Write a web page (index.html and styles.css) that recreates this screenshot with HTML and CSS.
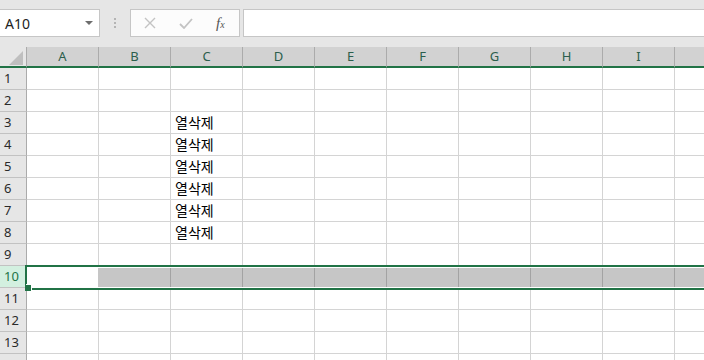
FILE: index.html
```html
<!DOCTYPE html>
<html lang="ko">
<head>
    <meta charset="UTF-8">
    <title>Sheet1</title>
    <link rel="stylesheet" href="styles.css">
</head>
<body>
    <div class="toolbar">
        <div class="namebox">
            <span>A10</span>
            <span class="caret"></span>
        </div>
        <div class="grip"><i></i><i></i><i></i></div>
        <div class="fxbox">
            <svg class="ico" width="12" height="12" viewBox="0 0 12 12"><path d="M1 1L11 11M11 1L1 11" stroke="#c3c3c3" stroke-width="1.4" fill="none"/></svg>
            <svg class="ico" width="14" height="11" viewBox="0 0 14 11"><path d="M1 6L5 10L13 1" stroke="#c3c3c3" stroke-width="1.8" fill="none"/></svg>
            <span class="fx">f<sub>x</sub></span>
        </div>
        <div class="formula"></div>
    </div>

    <div class="sheet">
        <div class="row head">
            <div class="corner"><span class="tri"></span></div>
            <div class="ch">A</div><div class="ch">B</div><div class="ch">C</div><div class="ch">D</div><div class="ch">E</div>
            <div class="ch">F</div><div class="ch">G</div><div class="ch">H</div><div class="ch">I</div><div class="ch"></div>
        </div>
        <div class="row"><div class="rh">1</div><div class="c"></div><div class="c"></div><div class="c"></div><div class="c"></div><div class="c"></div><div class="c"></div><div class="c"></div><div class="c"></div><div class="c"></div><div class="c"></div></div>
        <div class="row"><div class="rh">2</div><div class="c"></div><div class="c"></div><div class="c"></div><div class="c"></div><div class="c"></div><div class="c"></div><div class="c"></div><div class="c"></div><div class="c"></div><div class="c"></div></div>
        <div class="row"><div class="rh">3</div><div class="c"></div><div class="c"></div><div class="c">열삭제</div><div class="c"></div><div class="c"></div><div class="c"></div><div class="c"></div><div class="c"></div><div class="c"></div><div class="c"></div></div>
        <div class="row"><div class="rh">4</div><div class="c"></div><div class="c"></div><div class="c">열삭제</div><div class="c"></div><div class="c"></div><div class="c"></div><div class="c"></div><div class="c"></div><div class="c"></div><div class="c"></div></div>
        <div class="row"><div class="rh">5</div><div class="c"></div><div class="c"></div><div class="c">열삭제</div><div class="c"></div><div class="c"></div><div class="c"></div><div class="c"></div><div class="c"></div><div class="c"></div><div class="c"></div></div>
        <div class="row"><div class="rh">6</div><div class="c"></div><div class="c"></div><div class="c">열삭제</div><div class="c"></div><div class="c"></div><div class="c"></div><div class="c"></div><div class="c"></div><div class="c"></div><div class="c"></div></div>
        <div class="row"><div class="rh">7</div><div class="c"></div><div class="c"></div><div class="c">열삭제</div><div class="c"></div><div class="c"></div><div class="c"></div><div class="c"></div><div class="c"></div><div class="c"></div><div class="c"></div></div>
        <div class="row"><div class="rh">8</div><div class="c"></div><div class="c"></div><div class="c">열삭제</div><div class="c"></div><div class="c"></div><div class="c"></div><div class="c"></div><div class="c"></div><div class="c"></div><div class="c"></div></div>
        <div class="row"><div class="rh">9</div><div class="c"></div><div class="c"></div><div class="c"></div><div class="c"></div><div class="c"></div><div class="c"></div><div class="c"></div><div class="c"></div><div class="c"></div><div class="c"></div></div>
        <div class="row selrow"><div class="rh">10</div><div class="c active"></div><div class="c"></div><div class="c"></div><div class="c"></div><div class="c"></div><div class="c"></div><div class="c"></div><div class="c"></div><div class="c"></div><div class="c"></div></div>
        <div class="row"><div class="rh">11</div><div class="c"></div><div class="c"></div><div class="c"></div><div class="c"></div><div class="c"></div><div class="c"></div><div class="c"></div><div class="c"></div><div class="c"></div><div class="c"></div></div>
        <div class="row"><div class="rh">12</div><div class="c"></div><div class="c"></div><div class="c"></div><div class="c"></div><div class="c"></div><div class="c"></div><div class="c"></div><div class="c"></div><div class="c"></div><div class="c"></div></div>
        <div class="row"><div class="rh">13</div><div class="c"></div><div class="c"></div><div class="c"></div><div class="c"></div><div class="c"></div><div class="c"></div><div class="c"></div><div class="c"></div><div class="c"></div><div class="c"></div></div>
        <div class="row"><div class="rh"></div><div class="c"></div><div class="c"></div><div class="c"></div><div class="c"></div><div class="c"></div><div class="c"></div><div class="c"></div><div class="c"></div><div class="c"></div><div class="c"></div></div>

        <div class="selection"></div>
        <div class="handle"></div>
    </div>
</body>
</html>
```

FILE: styles.css
```css
body {
    margin: 0;
    width: 704px;
    height: 360px;
    overflow: hidden;
    background-color: #fff;
    font-family: "Noto Sans", "Open Sans", sans-serif;
}

.toolbar {
    display: flex;
    align-items: flex-start;
    height: 47px;
    padding-top: 9px;
    box-sizing: border-box;
    background-color: #e6e6e6;
}

.namebox {
    display: flex;
    align-items: center;
    justify-content: space-between;
    width: 100px;
    height: 28px;
    padding: 0 6px 0 5px;
    box-sizing: border-box;
    background-color: #fff;
    border: 1px solid #c6c6c6;
    border-left: none;
    font-size: 14px;
    color: #222;
}

.caret {
    width: 0;
    height: 0;
    border-left: 4px solid transparent;
    border-right: 4px solid transparent;
    border-top: 4px solid #6d6d6d;
}

.grip {
    display: flex;
    flex-direction: column;
    align-items: center;
    gap: 2px;
    width: 30px;
    padding-top: 9px;
}

.grip i {
    width: 2px;
    height: 2px;
    background-color: #b4b4b4;
}

.fxbox {
    display: flex;
    align-items: center;
    width: 110px;
    height: 28px;
    padding-left: 13px;
    box-sizing: border-box;
    background-color: #fcfcfc;
    border: 1px solid #c6c6c6;
}

.ico {
    display: block;
    margin-right: 23px;
}

.fx {
    font-family: "Liberation Serif", serif;
    font-style: italic;
    font-size: 15px;
    color: #555;
    line-height: 1;
}

.fx sub {
    font-size: 10px;
    vertical-align: 0;
}

.formula {
    flex: 1;
    height: 28px;
    margin-left: 3px;
    box-sizing: border-box;
    background-color: #fff;
    border: 1px solid #c6c6c6;
    border-right: none;
}

.sheet {
    position: relative;
}

.row {
    display: flex;
    height: 22px;
}

.head {
    height: 21px;
}

.corner {
    position: relative;
    flex: none;
    width: 27px;
    background-color: #e6e6e6;
    border-right: 1px solid #ababab;
    border-bottom: 2px solid #217346;
    box-sizing: border-box;
}

.tri {
    position: absolute;
    right: 3px;
    bottom: 1px;
    width: 0;
    height: 0;
    border-left: 14px solid transparent;
    border-bottom: 14px solid #bfbfbf;
}

.ch {
    flex: none;
    width: 72px;
    box-sizing: border-box;
    background-color: #d2d2d2;
    border-right: 1px solid #ababab;
    border-bottom: 2px solid #217346;
    text-align: center;
    font-size: 13px;
    line-height: 19px;
    color: #2b5e4c;
}

.rh {
    flex: none;
    width: 27px;
    box-sizing: border-box;
    padding-left: 4px;
    background-color: #e6e6e6;
    border-right: 1px solid #ababab;
    border-bottom: 1px solid #c2c2c2;
    font-size: 13px;
    line-height: 21px;
    color: #2a2a2a;
}

.c {
    flex: none;
    width: 72px;
    box-sizing: border-box;
    padding-left: 4px;
    border-right: 1px solid #d4d4d4;
    border-bottom: 1px solid #d4d4d4;
    font-family: "Noto Sans CJK KR", "Noto Sans", sans-serif;
    font-size: 14px;
    line-height: 21px;
    color: #000;
}

.selrow .rh {
    background-color: #d3f0e0;
    color: #217346;
}

.selrow .c {
    background-color: #c6c6c6;
    border-right-color: #a3a3a3;
}

.selrow .active {
    background-color: #fff;
    border-right-color: #c6c6c6;
}

.selection {
    position: absolute;
    left: 25px;
    right: -10px;
    top: 218px;
    height: 25px;
    border: 2px solid #217346;
    box-shadow: inset 0 0 0 1px #fff;
    box-sizing: border-box;
}

.handle {
    position: absolute;
    left: 25px;
    top: 238px;
    width: 6px;
    height: 6px;
    background-color: #217346;
    box-shadow: 1px -1px 0 #fff;
}
```
